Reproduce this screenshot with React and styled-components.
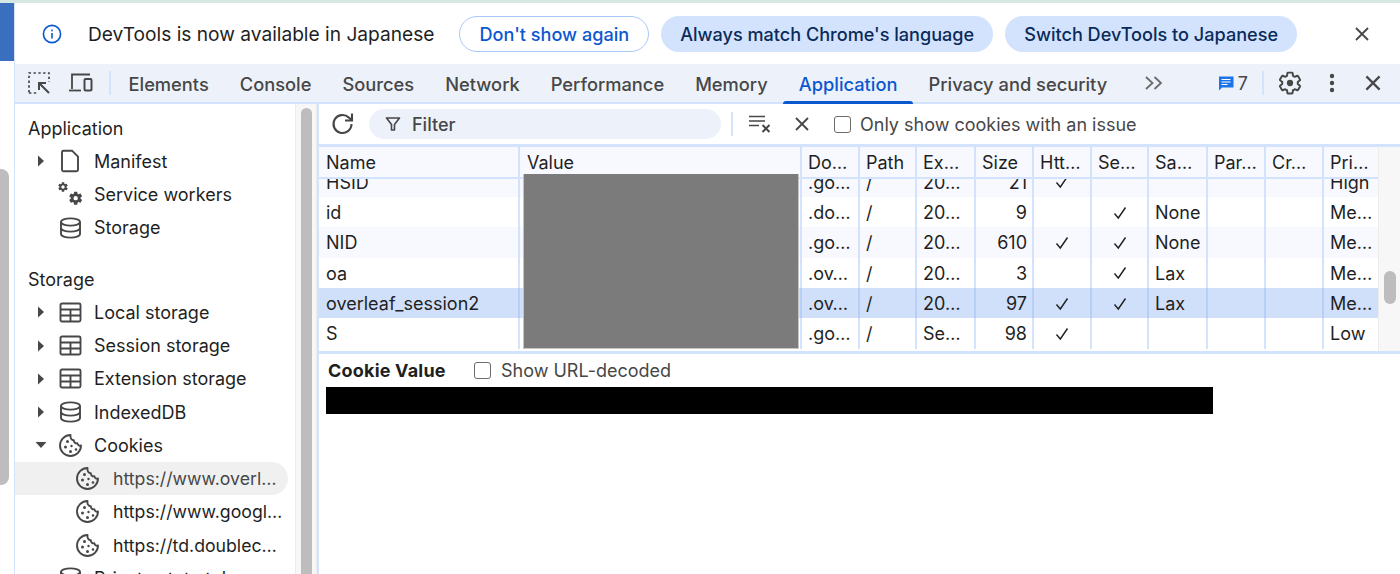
import React from 'react';
import styled, { createGlobalStyle } from 'styled-components';

const GlobalStyle = createGlobalStyle`
  html, body {
    margin: 0;
    padding: 0;
    height: 100%;
    overflow: hidden;
    background: #ffffff;
  }
  * { box-sizing: border-box; }
`;

const Page = styled.div`
  width: 1400px;
  height: 574px;
  display: flex;
  flex-direction: column;
  overflow: hidden;
  font-family: Inter, 'Liberation Sans', sans-serif;
  font-size: 18px;
  color: #1f1f1f;
  border-top: 3px solid #d5e8e4;
`;

const Window = styled.div`
  flex: 1;
  min-height: 0;
  display: flex;
`;

const Edge = styled.div`
  width: 14px;
  flex: none;
  display: flex;
  flex-direction: column;
  background: #ffffff;
`;

const EdgeBlock = styled.div`
  height: 58px;
  flex: none;
  background: #3a6fc0;
`;

const EdgeThumb = styled.div`
  width: 9px;
  height: 316px;
  margin-top: 108px;
  background: #bdbdbd;
  border-radius: 0 8px 8px 0;
`;

const Devtools = styled.div`
  flex: 1;
  min-width: 0;
  display: flex;
  flex-direction: column;
  border-left: 1px solid #d3e3fd;
`;

const InfoBar = styled.div`
  height: 61px;
  flex: none;
  display: flex;
  align-items: center;
  padding: 0 27px;
`;

const InfoText = styled.span`
  margin-left: 26px;
  margin-right: 25px;
  font-size: 19.15px;
`;

const Pill = styled.button`
  height: 36px;
  padding: 0 19px;
  margin-right: 12px;
  border-radius: 18px;
  font: inherit;
  font-size: 18.1px;
  font-weight: 500;
  white-space: nowrap;
  border: ${p => (p.$outlined ? '1px solid #a8c7fa' : 'none')};
  background: ${p => (p.$outlined ? '#ffffff' : '#d3e3fd')};
  color: ${p => (p.$outlined ? '#0b57d0' : '#0a2a5a')};
`;

const BarClose = styled.div`
  margin-left: auto;
  display: flex;
  margin-right: 1px;
`;

const TabBar = styled.div`
  height: 40px;
  flex: none;
  display: flex;
  align-items: stretch;
  background: #edf2fa;
  border-bottom: 2px solid #d3e3fd;
`;

const ToolIcon = styled.div`
  display: flex;
  align-items: center;
  justify-content: center;
  width: ${p => p.$w || 42}px;
  flex: none;
`;

const BarSep = styled.div`
  width: 2px;
  flex: none;
  align-self: center;
  height: 24px;
  background: #d3e3fd;
  margin-left: ${p => p.$left || 0}px;
  margin-right: ${p => p.$right || 0}px;
`;

const Tab = styled.div`
  position: relative;
  display: flex;
  align-items: center;
  padding: 2px 15.5px 0;
  font-size: 18.3px;
  font-weight: 500;
  white-space: nowrap;
  color: ${p => (p.$active ? '#0b57d0' : '#474747')};

  ${p => p.$active && `
    &::after {
      content: '';
      position: absolute;
      left: 0;
      right: 0;
      bottom: -2px;
      height: 3px;
      border-radius: 3px 3px 0 0;
      background: #0b57d0;
    }
  `}
`;

const IssueCount = styled.div`
  display: flex;
  align-items: center;
  gap: 4px;
  margin-left: 33px;
  width: 44px;
  color: #474747;
`;

const Body = styled.div`
  flex: 1;
  min-height: 0;
  display: flex;
`;

const Sidebar = styled.div`
  width: 280px;
  flex: none;
  padding-top: 7.5px;
  overflow: hidden;
`;

const GroupTitle = styled.div`
  height: 33px;
  line-height: 33px;
  padding-left: 13px;
  margin-top: ${p => p.$top || 0}px;
`;

const TreeRow = styled.div`
  height: 33.25px;
  display: flex;
  align-items: center;
  margin-right: 7px;
  padding-left: ${p => (p.$child ? 59 : 18)}px;
  white-space: nowrap;
  font-size: ${p => (p.$child ? 17.7 : 18)}px;
  color: ${p => (p.$selected ? '#474747' : '#1f1f1f')};
  background: ${p => (p.$selected ? '#f0f0f0' : 'transparent')};
  border-radius: 0 17px 17px 0;
`;

const Arrow = styled.span`
  width: 16px;
  height: 16px;
  flex: none;
  display: flex;
  align-items: center;
  justify-content: center;
  margin-right: 8px;
`;

const RowIcon = styled.span`
  width: 26px;
  height: 26px;
  flex: none;
  display: flex;
  align-items: center;
  justify-content: center;
  margin-right: ${p => p.$gap || 11}px;
`;

const SideScroll = styled.div`
  width: 22px;
  flex: none;
  padding: 4px 4px 0 5px;
  background: #f7f7f7;
  border-left: 1px solid #ececec;
  border-right: 1px solid #ececec;
`;

const SideThumb = styled.div`
  height: 100%;
  background: #bdbdbd;
  border-radius: 6px 6px 0 0;
`;

const Panel = styled.div`
  flex: 1;
  min-width: 0;
  display: flex;
  flex-direction: column;
  border-left: 2px solid #d3e3fd;
`;

const Toolbar = styled.div`
  height: 40px;
  flex: none;
  display: flex;
  align-items: center;
  padding-left: 11px;
`;

const FilterBox = styled.div`
  width: 352px;
  height: 30px;
  margin-left: 13px;
  border-radius: 15px;
  background: #edf2fa;
  display: flex;
  align-items: center;
  gap: 11px;
  padding-left: 16px;
  color: #474747;
  font-weight: 500;
`;

const CheckBox = styled.span`
  width: 17px;
  height: 17px;
  flex: none;
  border: 1.5px solid #6b6b6b;
  border-radius: 3px;
  background: #ffffff;
  margin-left: ${p => p.$left || 0}px;
  margin-right: ${p => p.$gap || 10}px;
`;

const Label = styled.span`
  color: #474747;
  white-space: nowrap;
`;

const TableWrap = styled.div`
  position: relative;
  height: 210px;
  flex: none;
  display: flex;
  border-top: 3px solid #d3e3fd;
  border-bottom: 3px solid #d3e3fd;
`;

const Table = styled.div`
  flex: 1;
  min-width: 0;
  display: flex;
  flex-direction: column;
`;

const HeadRow = styled.div`
  display: grid;
  grid-template-columns: ${p => p.$cols};
  height: 32px;
  flex: none;
  background: #f8f9fe;
  border-bottom: 2px solid #d3e3fd;
`;

const Rows = styled.div`
  flex: 1;
  min-height: 0;
  overflow: hidden;
  display: flex;
  flex-direction: column;
  justify-content: flex-end;
  padding-bottom: 2.5px;
`;

const Row = styled.div`
  display: grid;
  grid-template-columns: ${p => p.$cols};
  height: 30.3px;
  flex: none;
  background: ${p => (p.$selected ? '#d0e0fb' : p.$odd ? '#f8f9fe' : '#ffffff')};
`;

const Cell = styled.div`
  padding: 0 6px;
  display: flex;
  align-items: center;
  justify-content: ${p => p.$align || 'flex-start'};
  white-space: nowrap;
  overflow: hidden;
  border-right: 2px solid ${p => (p.$selected ? '#b7cef7' : '#d3e3fd')};
  color: #1f1f1f;
  &:nth-child(-n + 2) { padding-left: 7px; }
  &:last-child { border-right: none; }
`;

const DataCell = styled(Cell)`
  padding-top: 1px;
  padding-right: ${p => (p.$align === 'flex-end' ? 5 : 6)}px;
`;

const TableScroll = styled.div`
  width: 22px;
  flex: none;
  background: #f7f7f7;
  border-left: 1px solid #ececec;
  padding: 124px 4px 0 5px;
`;

const TableThumb = styled.div`
  height: 33px;
  border-radius: 6px;
  background: #bdbdbd;
`;

const Redaction = styled.div`
  position: absolute;
  left: 204px;
  top: 27px;
  width: 276px;
  height: 175px;
  background: #7b7b7b;
  border: 1px solid #c4c4c4;
  border-top: none;
`;

const DetailHead = styled.div`
  height: 33px;
  flex: none;
  display: flex;
  align-items: center;
  padding-left: 9px;
`;

const DetailTitle = styled.span`
  font-weight: 700;
  width: 146px;
  flex: none;
  color: #1f1f1f;
  letter-spacing: 0.2px;
`;

const DetailValue = styled.div`
  width: 887px;
  height: 27px;
  margin-left: 7px;
  background: #000000;
`;

const Close = ({ size = 20, color = '#474747', w = 1.8 }) => (
  <svg width={size} height={size} viewBox="0 0 20 20" fill="none" stroke={color} strokeWidth={w}>
    <path d="M4 4l12 12M16 4L4 16" />
  </svg>
);

const InfoIcon = () => (
  <svg width="20" height="20" viewBox="0 0 20 20" fill="none">
    <circle cx="10" cy="10" r="8.6" stroke="#0b57d0" strokeWidth="1.6" />
    <rect x="9.2" y="9" width="1.6" height="5.5" fill="#0b57d0" />
    <rect x="9.2" y="5.6" width="1.6" height="1.7" fill="#0b57d0" />
  </svg>
);

const GEAR = 'M19.14 12.94c.04-.3.06-.61.06-.94 0-.32-.02-.64-.07-.94l2.03-1.58c.18-.14.23-.41.12-.61l-1.92-3.32c-.12-.22-.37-.29-.59-.22l-2.39.96c-.5-.38-1.03-.7-1.62-.94l-.36-2.54c-.04-.24-.24-.41-.48-.41h-3.84c-.24 0-.43.17-.47.41l-.36 2.54c-.59.24-1.13.57-1.62.94l-2.39-.96c-.22-.08-.47 0-.59.22L2.74 8.87c-.12.21-.08.47.12.61l2.03 1.58c-.05.3-.09.63-.09.94s.02.64.07.94l-2.03 1.58c-.18.14-.23.41-.12.61l1.92 3.32c.12.22.37.29.59.22l2.39-.96c.5.38 1.03.7 1.62.94l.36 2.54c.05.24.24.41.48.41h3.84c.24 0 .44-.17.47-.41l.36-2.54c.59-.24 1.13-.56 1.62-.94l2.39.96c.22.08.47 0 .59-.22l1.92-3.32c.12-.22.07-.47-.12-.61l-2.01-1.58z';

const SelectIcon = () => (
  <svg width="24" height="24" viewBox="0 0 24 24" fill="none" stroke="#474747" strokeWidth="1.7">
    <path d="M2 21.5V2h20v9" strokeDasharray="2.4 2.4" />
    <path d="M2 22h8" strokeDasharray="2.4 2.4" />
    <path d="M22 22L12.5 12.5M12 19v-7h7" strokeWidth="2" />
  </svg>
);

const DeviceIcon = () => (
  <svg width="26" height="24" viewBox="0 0 26 24" fill="none" stroke="#474747" strokeWidth="1.8">
    <path d="M4 18V3.5h18" />
    <path d="M1 19.5h12" />
    <rect x="16.5" y="8" width="7" height="11.5" rx="1" strokeWidth="2" />
  </svg>
);

const MoreTabs = () => (
  <svg width="20" height="16" viewBox="0 0 20 16" fill="none" stroke="#6b6b6b" strokeWidth="1.8">
    <path d="M2 2l6.5 6L2 14M10.5 2L17 8l-6.5 6" />
  </svg>
);

const IssueIcon = () => (
  <svg width="16" height="16" viewBox="0 0 16 16">
    <path d="M1 1.5h14.5v11H4L1 15.5z" fill="#1a73e8" />
    <path d="M3.5 4.5h9M3.5 7h9M3.5 9.5h6" stroke="#ffffff" strokeWidth="1.2" />
  </svg>
);

const GearIcon = () => (
  <svg width="26" height="26" viewBox="0 0 24 24" fill="none">
    <path d={GEAR} stroke="#474747" strokeWidth="1.8" strokeLinejoin="round" />
    <circle cx="12" cy="12" r="2.9" fill="#474747" />
  </svg>
);

const MoreIcon = () => (
  <svg width="6" height="20" viewBox="0 0 6 20" fill="#474747">
    <circle cx="3" cy="3" r="2.2" />
    <circle cx="3" cy="10" r="2.2" />
    <circle cx="3" cy="17" r="2.2" />
  </svg>
);

const TriRight = () => (
  <svg width="8" height="12" viewBox="0 0 8 12" fill="#474747"><path d="M1 0.5l6 5.5-6 5.5z" /></svg>
);

const TriDown = () => (
  <svg width="12" height="8" viewBox="0 0 12 8" fill="#474747"><path d="M0.5 1h11L6 7z" /></svg>
);

const DocIcon = () => (
  <svg width="20" height="24" viewBox="0 0 20 24" fill="none" stroke="#474747" strokeWidth="1.9">
    <path d="M2 3.2a1.5 1.5 0 011.5-1.5h8.5L18 7.7v13a1.5 1.5 0 01-1.5 1.5h-13A1.5 1.5 0 012 20.7z" />
  </svg>
);

const GearsIcon = () => (
  <svg width="26" height="26" viewBox="0 0 26 26" fill="#474747">
    <g transform="scale(0.5)">
      <path d={`${GEAR}M12 15.4a3.4 3.4 0 100-6.8 3.4 3.4 0 000 6.8z`} fillRule="evenodd" />
    </g>
    <g transform="translate(10.5 9) scale(0.68)">
      <path d={`${GEAR}M12 15.2a3.2 3.2 0 100-6.4 3.2 3.2 0 000 6.4z`} fillRule="evenodd" />
    </g>
  </svg>
);

const DbIcon = () => (
  <svg width="23" height="22" viewBox="0 0 23 22" fill="none" stroke="#474747" strokeWidth="1.9">
    <ellipse cx="11.5" cy="5" rx="9.5" ry="3.6" />
    <path d="M2 5v12c0 2 4.2 3.6 9.5 3.6S21 19 21 17V5" />
    <path d="M2 11c0 2 4.2 3.6 9.5 3.6S21 13 21 11" />
  </svg>
);

const GridIcon = () => (
  <svg width="23" height="21" viewBox="0 0 23 21" fill="none" stroke="#474747" strokeWidth="1.9">
    <rect x="1.5" y="1.5" width="20" height="18" rx="1.5" />
    <path d="M1.5 7.5h20M1.5 13.5h20M11.5 7.5v12" />
  </svg>
);

const CookieIcon = () => (
  <svg width="25" height="25" viewBox="0 0 25 25" fill="none" stroke="#474747" strokeWidth="1.9">
    <path d="M12.5 2a10.5 10.5 0 1010.5 10.5c-1.8.6-3.3-.4-3.6-2.2-2 .3-3.6-1-3.6-3C13.6 7.4 12 5 12.5 2z" strokeLinejoin="round" />
    <g fill="#474747" stroke="none">
      <circle cx="9.5" cy="8.5" r="1.5" />
      <circle cx="7.5" cy="14" r="1.5" />
      <circle cx="13.5" cy="13" r="1.2" />
      <circle cx="12.5" cy="18.5" r="1.5" />
      <circle cx="18" cy="16.5" r="1.3" />
    </g>
  </svg>
);

const RefreshIcon = () => (
  <svg width="26" height="26" viewBox="0 0 26 26" fill="none" stroke="#474747" strokeWidth="2.1">
    <path d="M21.5 13a9 9 0 11-2.7-6.4L21.5 9" />
    <path d="M22 2.5V9.5H15" />
  </svg>
);

const FunnelIcon = () => (
  <svg width="16" height="16" viewBox="0 0 16 16" fill="none" stroke="#474747" strokeWidth="1.6">
    <path d="M1.5 2h13L9.5 8.5V14h-3V8.5z" strokeLinejoin="round" />
  </svg>
);

const ClearIcon = () => (
  <svg width="24" height="20" viewBox="0 0 24 20" fill="none" stroke="#474747" strokeWidth="1.7">
    <path d="M1 2.5h16M1 7h16M1 11.5h10" />
    <path d="M14.5 11l7 7M21.5 11l-7 7" strokeWidth="2" />
  </svg>
);

const Check = () => (
  <svg width="16" height="16" viewBox="0 0 16 16" fill="none" stroke="#1f1f1f" strokeWidth="1.4">
    <path d="M2.5 8.5L6.3 13 13.5 2.5" />
  </svg>
);

const COLS = '201px 282px 58px 57px 59px 58px 58px 57px 59px 58px 58px 54px';
const HEADERS = ['Name', 'Value', 'Do…', 'Path', 'Ex…', 'Size', 'Htt…', 'Se…', 'Sa…', 'Par…', 'Cr…', 'Pri…'];

const COOKIES = [
  { name: 'HSID', domain: '.go…', exp: '20…', size: '21', http: true, secure: false, same: '', pri: 'High' },
  { name: 'id', domain: '.do…', exp: '20…', size: '9', http: false, secure: true, same: 'None', pri: 'Me…' },
  { name: 'NID', domain: '.go…', exp: '20…', size: '610', http: true, secure: true, same: 'None', pri: 'Me…' },
  { name: 'oa', domain: '.ov…', exp: '20…', size: '3', http: false, secure: true, same: 'Lax', pri: 'Me…' },
  { name: 'overleaf_session2', domain: '.ov…', exp: '20…', size: '97', http: true, secure: true, same: 'Lax', pri: 'Me…', selected: true },
  { name: 'S', domain: '.go…', exp: 'Se…', size: '98', http: true, secure: false, same: '', pri: 'Low' },
];

const TABS = ['Elements', 'Console', 'Sources', 'Network', 'Performance', 'Memory', 'Application', 'Privacy and security'];

const APP_ROWS = [
  { label: 'Manifest', icon: <DocIcon />, arrow: <TriRight /> },
  { label: 'Service workers', icon: <GearsIcon /> },
  { label: 'Storage', icon: <DbIcon /> },
];

const STORAGE_ROWS = [
  { label: 'Local storage', icon: <GridIcon />, arrow: <TriRight /> },
  { label: 'Session storage', icon: <GridIcon />, arrow: <TriRight /> },
  { label: 'Extension storage', icon: <GridIcon />, arrow: <TriRight /> },
  { label: 'IndexedDB', icon: <DbIcon />, arrow: <TriRight /> },
  { label: 'Cookies', icon: <CookieIcon />, arrow: <TriDown /> },
];

const COOKIE_SITES = ['https://www.overl…', 'https://www.googl…', 'https://td.doublec…'];

const TreeItem = ({ row }) => (
  <TreeRow>
    <Arrow>{row.arrow}</Arrow>
    <RowIcon>{row.icon}</RowIcon>
    {row.label}
  </TreeRow>
);

export default function App() {
  return (
    <Page>
      <GlobalStyle />
      <Window>
        <Edge>
          <EdgeBlock />
          <EdgeThumb />
        </Edge>
        <Devtools>
          <InfoBar>
            <InfoIcon />
            <InfoText>DevTools is now available in Japanese</InfoText>
            <Pill $outlined>Don't show again</Pill>
            <Pill>Always match Chrome's language</Pill>
            <Pill>Switch DevTools to Japanese</Pill>
            <BarClose><Close size={20} /></BarClose>
          </InfoBar>

          <TabBar>
            <ToolIcon $w={48}><SelectIcon /></ToolIcon>
            <ToolIcon $w={36}><DeviceIcon /></ToolIcon>
            <BarSep $left={10} $right={2} />
            {TABS.map(t => (
              <Tab key={t} $active={t === 'Application'}>{t}</Tab>
            ))}
            <ToolIcon $w={62}><MoreTabs /></ToolIcon>
            <IssueCount><IssueIcon />7</IssueCount>
            <BarSep />
            <ToolIcon $w={53}><GearIcon /></ToolIcon>
            <ToolIcon $w={30}><MoreIcon /></ToolIcon>
            <ToolIcon $w={53}><Close size={22} w={2} /></ToolIcon>
          </TabBar>

          <Body>
            <Sidebar>
              <GroupTitle>Application</GroupTitle>
              {APP_ROWS.map(r => <TreeItem key={r.label} row={r} />)}
              <GroupTitle $top={18.5}>Storage</GroupTitle>
              {STORAGE_ROWS.map(r => <TreeItem key={r.label} row={r} />)}
              {COOKIE_SITES.map((s, i) => (
                <TreeRow key={s} $child $selected={i === 0}>
                  <RowIcon $gap={13}><CookieIcon /></RowIcon>
                  {s}
                </TreeRow>
              ))}
              <TreeItem row={{ label: 'Private state tokens', icon: <DbIcon /> }} />
            </Sidebar>
            <SideScroll><SideThumb /></SideScroll>

            <Panel>
              <Toolbar>
                <RefreshIcon />
                <FilterBox><FunnelIcon />Filter</FilterBox>
                <BarSep $left={10} />
                <ToolIcon $w={54}><ClearIcon /></ToolIcon>
                <ToolIcon $w={30}><Close size={20} /></ToolIcon>
                <CheckBox $left={17} $gap={9} />
                <Label>Only show cookies with an issue</Label>
              </Toolbar>

              <TableWrap>
                <Table>
                  <HeadRow $cols={COLS}>
                    {HEADERS.map(h => <Cell key={h}>{h}</Cell>)}
                  </HeadRow>
                  <Rows>
                    {COOKIES.map((c, i) => (
                      <Row key={c.name} $cols={COLS} $selected={c.selected} $odd={i % 2 === 0}>
                        <DataCell $selected={c.selected}>{c.name}</DataCell>
                        <DataCell $selected={c.selected} />
                        <DataCell $selected={c.selected}>{c.domain}</DataCell>
                        <DataCell $selected={c.selected}>/</DataCell>
                        <DataCell $selected={c.selected}>{c.exp}</DataCell>
                        <DataCell $selected={c.selected} $align="flex-end">{c.size}</DataCell>
                        <DataCell $selected={c.selected} $align="center">{c.http && <Check />}</DataCell>
                        <DataCell $selected={c.selected} $align="center">{c.secure && <Check />}</DataCell>
                        <DataCell $selected={c.selected}>{c.same}</DataCell>
                        <DataCell $selected={c.selected} />
                        <DataCell $selected={c.selected} />
                        <DataCell $selected={c.selected}>{c.pri}</DataCell>
                      </Row>
                    ))}
                  </Rows>
                </Table>
                <TableScroll><TableThumb /></TableScroll>
                <Redaction />
              </TableWrap>

              <DetailHead>
                <DetailTitle>Cookie Value</DetailTitle>
                <CheckBox />
                <Label>Show URL-decoded</Label>
              </DetailHead>
              <DetailValue />
            </Panel>
          </Body>
        </Devtools>
      </Window>
    </Page>
  );
}
